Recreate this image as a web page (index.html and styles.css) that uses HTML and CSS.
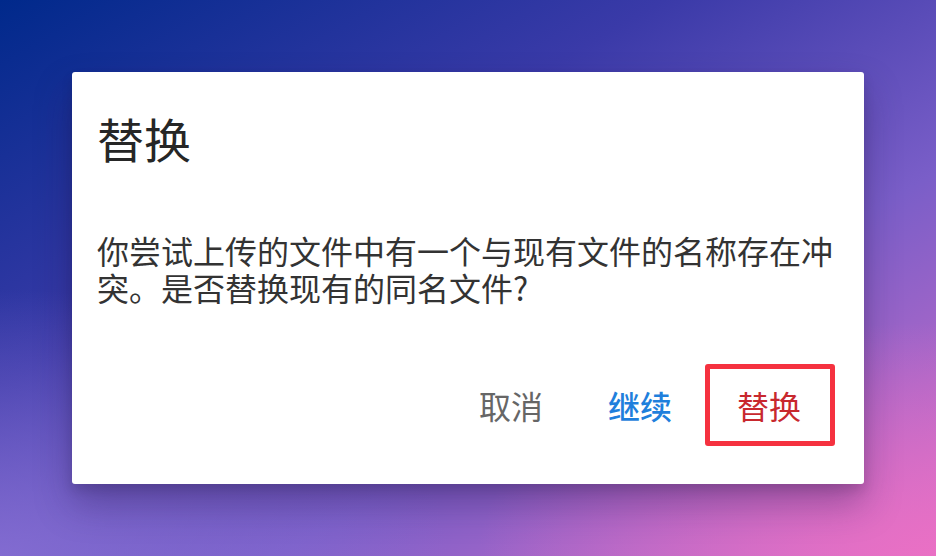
FILE: index.html
```html
<!DOCTYPE html>
<html lang="zh-CN">
<head>
<meta charset="utf-8">
<link rel="stylesheet" href="styles.css">
</head>
<body>
<div class="stage">
  <div class="dialog">
    <h1 class="title">替换</h1>
    <p class="message">你尝试上传的文件中有一个与现有文件的名称存在冲突。是否替换现有的同名文件?</p>
    <div class="actions">
      <button class="btn btn-cancel">取消</button>
      <button class="btn btn-continue">继续</button>
      <button class="btn btn-replace">替换</button>
    </div>
  </div>
</div>
</body>
</html>
```
FILE: styles.css
```css
html, body {
  margin: 0;
  padding: 0;
  width: 936px;
  height: 556px;
  overflow: hidden;
}
body {
  font-family: "Noto Sans CJK SC", "Noto Sans", sans-serif;
  background:
    radial-gradient(ellipse 70% 60% at 100% 100%, rgba(236,112,196,0.9), rgba(236,112,196,0) 70%),
    radial-gradient(ellipse 60% 60% at 0% 100%, rgba(140,115,215,0.8), rgba(140,115,215,0) 80%),
    linear-gradient(150deg, #00298b 0%, #3a3aa8 35%, #7a5ec8 65%, #d56fc8 100%);
}
.stage {
  padding: 72px;
  box-sizing: border-box;
  height: 556px;
}
.dialog {
  width: 792px;
  height: 412px;
  background: #fff;
  border-radius: 3px;
  box-sizing: border-box;
  padding: 43px 29px 0 25px;
  display: flex;
  flex-direction: column;
  box-shadow: 0 20px 36px rgba(40, 20, 80, 0.35), 0 6px 12px rgba(0,0,0,0.12);
}
.title {
  margin: 0;
  font-size: 47px;
  font-weight: 400;
  line-height: 46px;
  color: #262626;
}
.message {
  margin: 71px 0 0 0;
  font-size: 32px;
  line-height: 37px;
  color: #333;
}
.actions {
  margin-top: 58px;
  display: flex;
  justify-content: flex-end;
}
.btn {
  font-family: inherit;
  font-size: 32px;
  line-height: 32px;
  background: transparent;
  border: 5px solid transparent;
  border-radius: 3px;
  padding: 20px 28px 20px 27px;
  height: 82px;
  box-sizing: border-box;
  cursor: pointer;
}
.btn-cancel { color: #666; }
.btn-continue { color: #1f7fdc; font-weight: 500; }
.btn-replace {
  color: #c8282e;
  border-color: #f5313f;
  padding-right: 29px;
}
```
